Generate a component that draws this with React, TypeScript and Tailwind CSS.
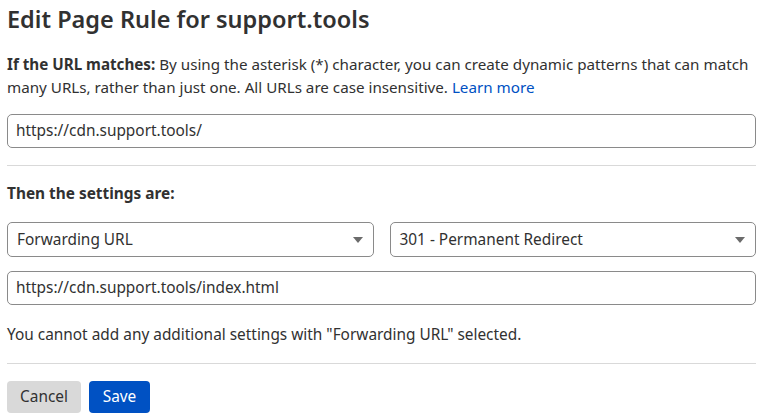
function Caret() {
    return (
        <svg width="10" height="6" viewBox="0 0 10 6" className="shrink-0">
            <path d="M0 0 L10 0 L5 6 Z" fill="#6b6b6b"/>
        </svg>
    );
}

function TextField({value}: { value: string }) {
    return (
        <div className="flex h-[34px] items-center rounded-[5px] border border-[#8a8a8a] bg-white px-[8px] text-[15.4px] text-[#313131]">
            {value}
        </div>
    );
}

function SelectField({value}: { value: string }) {
    return (
        <div className="flex h-[35px] flex-1 items-center justify-between rounded-[5px] border border-[#8a8a8a] bg-white pl-[9px] pr-[10px] text-[15.4px] text-[#313131]">
            <span>{value}</span>
            <Caret/>
        </div>
    );
}

export default function App() {
    return (
        <div className="min-h-[419px] w-[783px] bg-white text-[#313131]" style={{fontFamily: '"Noto Sans", sans-serif'}}>
            <div className="flex w-[756px] flex-col pl-[7px] pt-[2px]">
                <h1 className="text-[23.5px] font-semibold leading-[34px] text-[#313131]">Edit Page Rule for support.tools</h1>

                <p className="mt-[17px] whitespace-nowrap text-[15.2px] leading-[23px]">
                    <span className="font-bold">If the URL matches:</span> By using the asterisk (*) character, you can
                    create dynamic patterns that can match<br/>many URLs, rather than just one. All URLs are case
                    insensitive. <a className="text-[#0051c3]">Learn more</a>
                </p>

                <div className="mt-[15px]">
                    <TextField value="https://cdn.support.tools/"/>
                </div>

                <div className="mt-[17px] h-px bg-[#d9d9d9]"/>

                <h2 className="mt-[16px] text-[15.4px] font-bold leading-[23px]">Then the settings are:</h2>

                <div className="mt-[17px] flex gap-[16px]">
                    <SelectField value="Forwarding URL"/>
                    <SelectField value="301 - Permanent Redirect"/>
                </div>

                <div className="mt-[14px]">
                    <TextField value="https://cdn.support.tools/index.html"/>
                </div>

                <p className="mt-[18px] text-[15.4px] leading-[23px]">
                    You cannot add any additional settings with "Forwarding URL" selected.
                </p>

                <div className="mt-[17px] h-px bg-[#d9d9d9]"/>

                <div className="mt-[17px] flex gap-[8px]">
                    <button className="h-[32px] w-[74px] rounded-[4px] bg-[#d9d9d9] text-[15.4px] text-[#313131]">Cancel</button>
                    <button className="h-[32px] w-[61px] rounded-[4px] bg-[#0051c3] text-[15.4px] text-white">Save</button>
                </div>
            </div>
        </div>
    );
}
